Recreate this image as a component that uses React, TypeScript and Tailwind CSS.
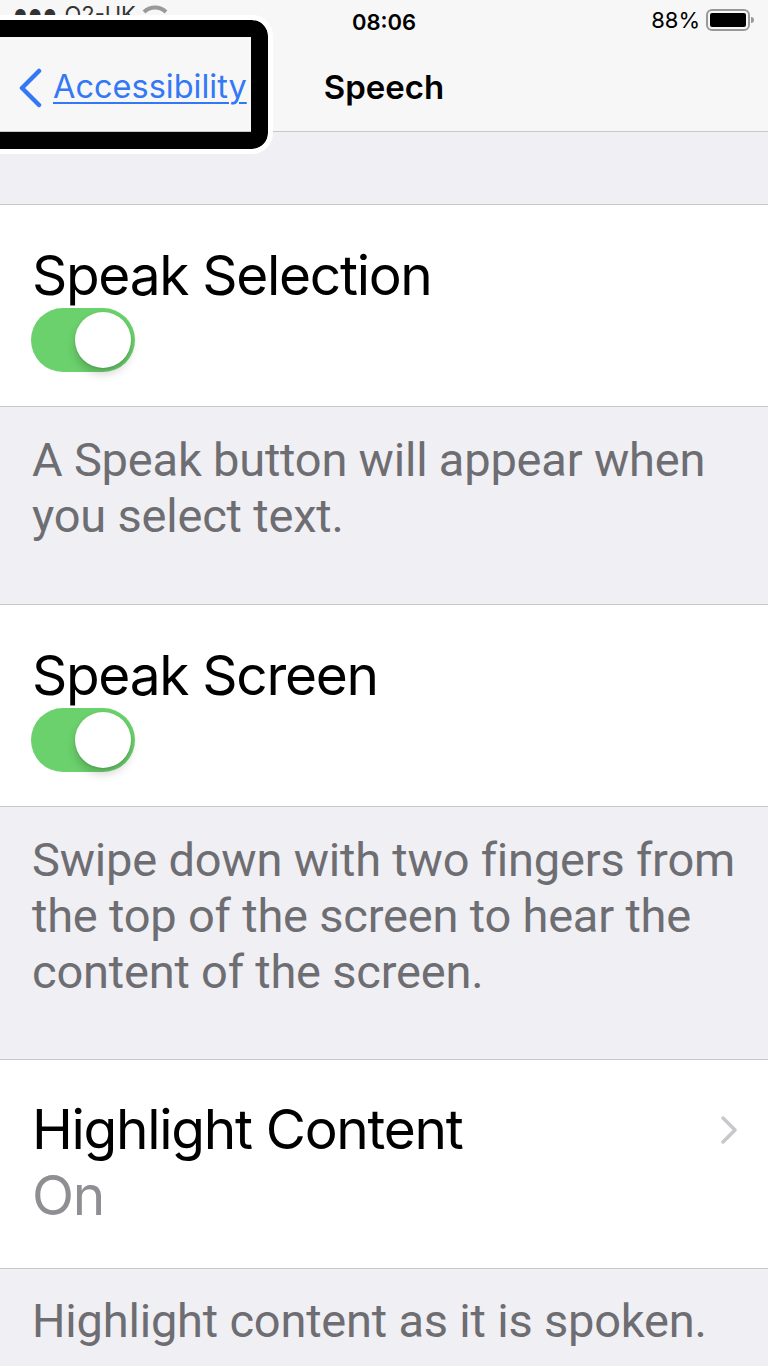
import React, { useState } from 'react';

const Toggle: React.FC<{ on: boolean; onChange: () => void }> = ({ on, onChange }) => (
  <button
    onClick={onChange}
    className={`relative block w-[104px] h-[64px] rounded-full transition-colors ${
      on ? 'bg-[#6bd16c]' : 'bg-[#e5e5ea]'
    }`}
  >
    <span
      className={`absolute top-[4px] w-[56px] h-[56px] rounded-full bg-white shadow-[0_6px_10px_rgba(0,0,0,0.18),0_1px_2px_rgba(0,0,0,0.12)] transition-all ${
        on ? 'left-[44px]' : 'left-[4px]'
      }`}
    />
  </button>
);

const Footer: React.FC<{ children: React.ReactNode; className?: string }> = ({ children, className }) => (
  <div className={`pl-[32px] pr-[14px] text-[47px] leading-[56px] tracking-[-0.2px] text-[#6d6d72] font-['Roboto',sans-serif] ${className ?? ''}`}>
    {children}
  </div>
);

const App: React.FC = () => {
  const [speakSelection, setSpeakSelection] = useState(true);
  const [speakScreen, setSpeakScreen] = useState(true);

  return (
    <div className="w-[768px] h-[1366px] overflow-hidden bg-[#efeff4] font-['Inter',sans-serif] relative">
      {/* Status bar */}
      <div className="h-[40px] bg-[#f7f7f7] flex items-center justify-between px-[14px] text-[22px] text-black">
        <div className="flex items-center gap-[6px] text-[#333] -mt-[12px]">
          <span className="tracking-[2px] text-[14px]">●●●</span>
          <span>O2-UK</span>
          <svg width="26" height="20" viewBox="0 0 26 20">
            <path d="M2 8 A16 16 0 0 1 24 8" fill="none" stroke="#999" strokeWidth="4" />
          </svg>
        </div>
        <div className="absolute left-1/2 -translate-x-1/2 top-[6px] font-semibold">08:06</div>
        <div className="flex items-center gap-[6px]">
          <span>88%</span>
          <svg width="48" height="24" viewBox="0 0 48 24">
            <rect x="1" y="2" width="42" height="20" rx="5" fill="none" stroke="#999" strokeWidth="2" />
            <rect x="4" y="5" width="36" height="14" rx="2" fill="#000" />
            <path d="M45 9 v6 a3 3 0 0 0 0 -6z" fill="#999" />
          </svg>
        </div>
      </div>

      {/* Navigation bar */}
      <div className="h-[92px] bg-[#f7f7f7] border-b border-[#c8c7cc] relative flex items-center pt-[4px]">
        <button className="flex items-center pl-[17px] gap-[10px] text-[#3478f6]">
          <svg width="26" height="40" viewBox="0 0 26 40">
            <path d="M22 3 L5 20 L22 37" fill="none" stroke="currentColor" strokeWidth="4.5" strokeLinecap="round" strokeLinejoin="round" />
          </svg>
          <span className="text-[32.5px] underline underline-offset-[4px] decoration-[2px]">Accessibility</span>
        </button>
        <div className="absolute left-1/2 -translate-x-1/2 text-[33px] font-semibold text-black">Speech</div>
      </div>

      {/* Highlight around back button */}
      <div className="absolute -left-[20px] top-[20px] w-[288px] h-[129px] border-[17px] border-black rounded-[16px] outline outline-[5px] outline-white" />

      <div className="h-[72px]" />

      {/* Speak Selection */}
      <div className="bg-white border-y border-[#c8c7cc] h-[203px] px-[32px] pt-[37px]">
        <div className="text-[55px] leading-[66px] tracking-[-1.3px] text-black">Speak Selection</div>
        <div className="-ml-[1px]">
          <Toggle on={speakSelection} onChange={() => setSpeakSelection(!speakSelection)} />
        </div>
      </div>
      <Footer className="pt-[25px] h-[197px]">A Speak button will appear when you select text.</Footer>

      {/* Speak Screen */}
      <div className="bg-white border-y border-[#c8c7cc] h-[203px] px-[32px] pt-[37px]">
        <div className="text-[55px] leading-[66px] tracking-[-1.3px] text-black">Speak Screen</div>
        <div className="-ml-[1px]">
          <Toggle on={speakScreen} onChange={() => setSpeakScreen(!speakScreen)} />
        </div>
      </div>
      <Footer className="pt-[25px] h-[252px]">
        Swipe down with two fingers from the top of the screen to hear the content of the screen.
      </Footer>

      {/* Highlight Content */}
      <div className="bg-white border-y border-[#c8c7cc] h-[210px] pl-[32px] pr-[30px] relative">
        <div className="absolute left-[32px] top-[36px]">
          <div className="text-[55px] leading-[66px] tracking-[-1.3px] text-black">Highlight Content</div>
          <div className="text-[55px] leading-[66px] tracking-[-1.3px] text-[#8e8e93]">On</div>
        </div>
        <div className="absolute right-[30px] top-[56px]">
          <svg width="18" height="28" viewBox="0 0 18 28">
            <path d="M3 2 L15 14 L3 26" fill="none" stroke="#c7c7cc" strokeWidth="3.5" strokeLinecap="round" strokeLinejoin="round" />
          </svg>
        </div>
      </div>
      <Footer className="pt-[24px]">Highlight content as it is spoken.</Footer>
    </div>
  );
};

export default App;
